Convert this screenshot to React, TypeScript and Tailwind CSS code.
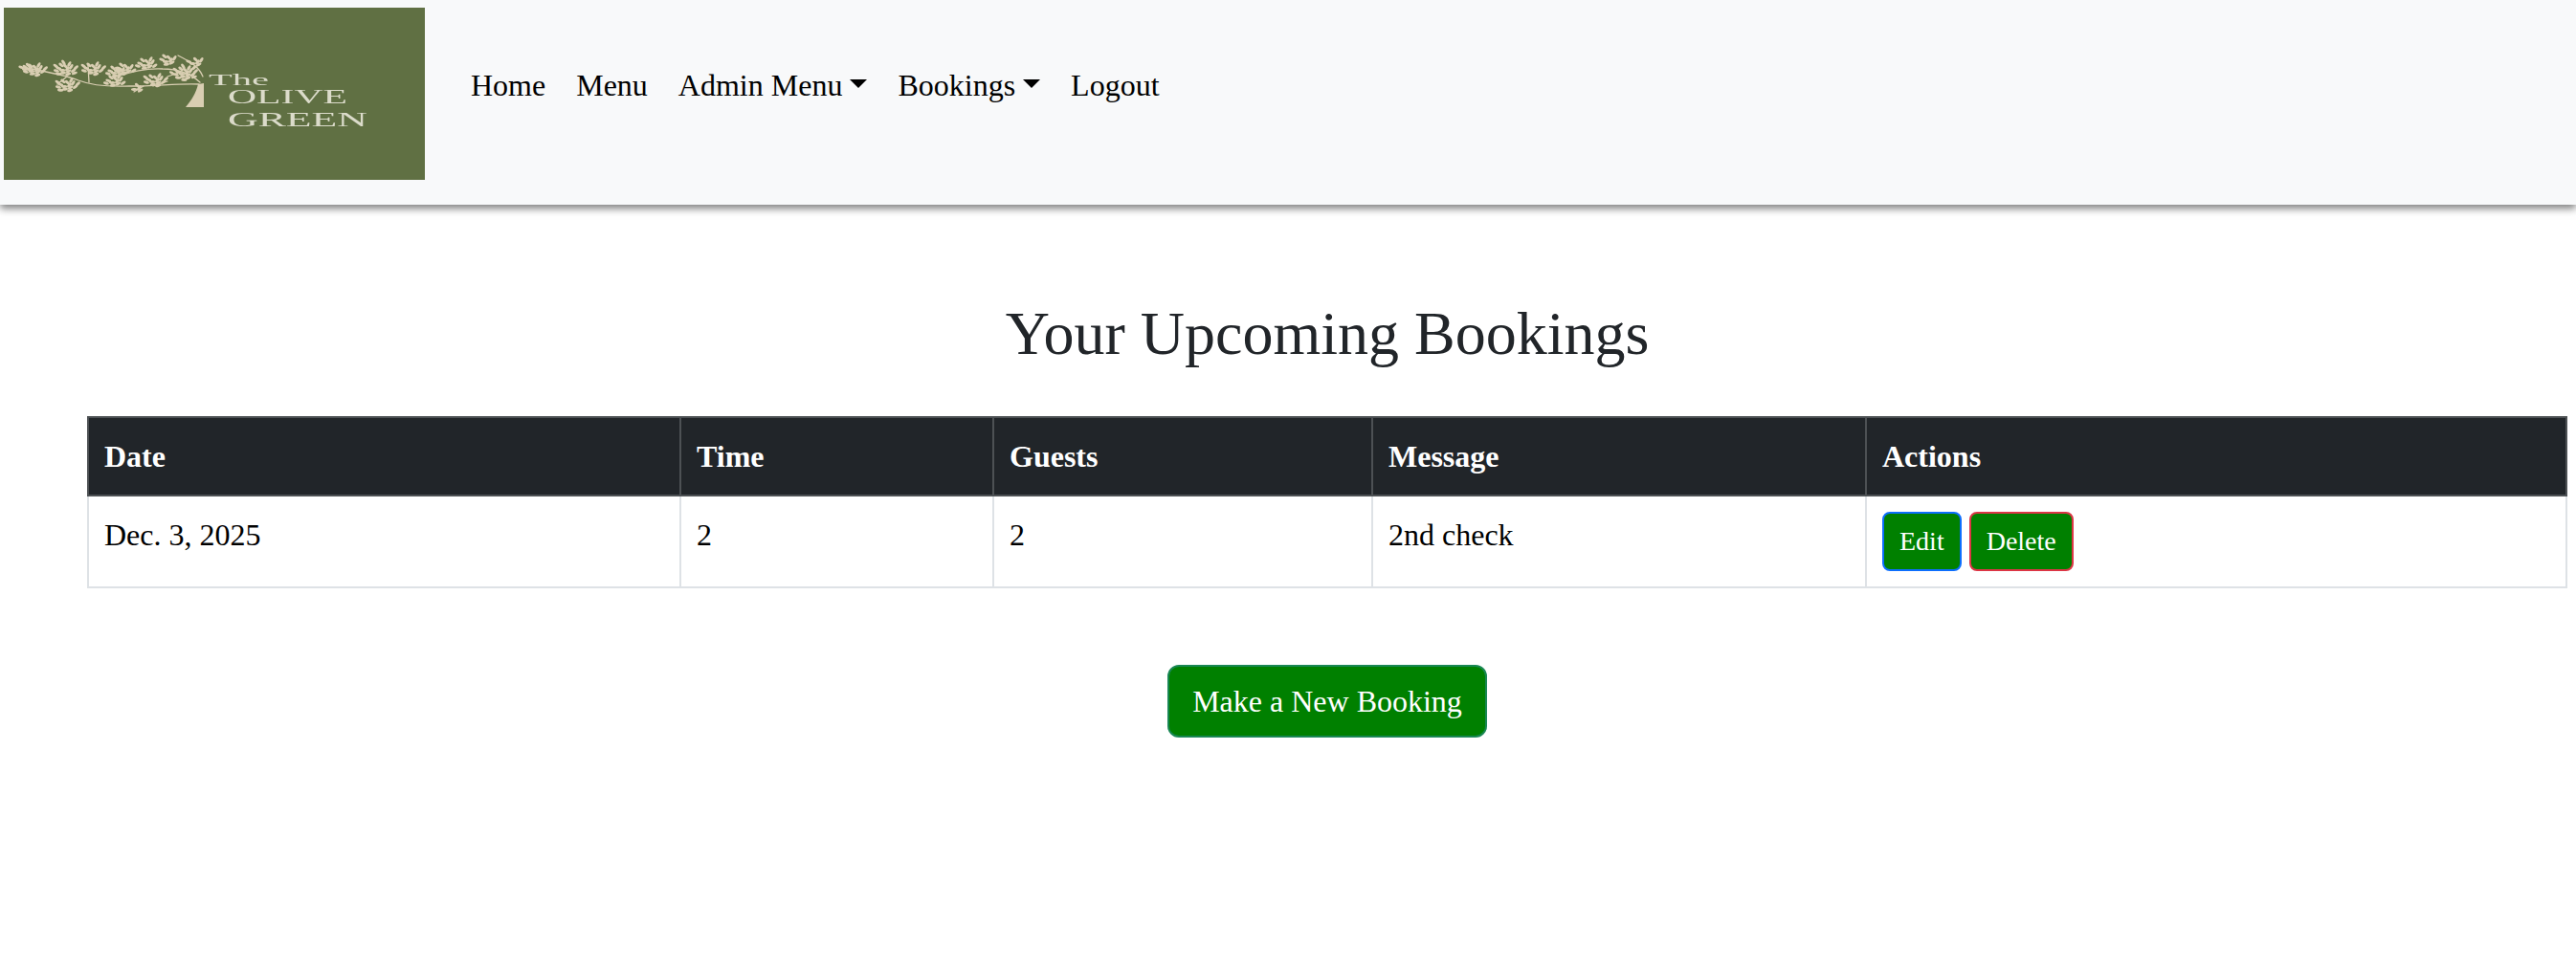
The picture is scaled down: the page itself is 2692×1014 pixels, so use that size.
const serif = "font-['Liberation_Serif',serif]";

const clusters: [number, number, number][] = [
  [36, 73, 14], [29, 71, 5], [68, 72, 17], [97, 72, 14], [70, 89, 15], [122, 75, 10], [131, 72, 10],
  [120, 85, 11], [153, 67, 11], [176, 63, 8], [162, 84, 14], [193, 76, 20], [204, 65, 6], [143, 92, 4],
];

function leaves() {
  const out: { x: number; y: number; a: number }[] = [];
  clusters.forEach(([cx, cy, n]) => {
    for (let i = 0; i < n; i++) {
      const t = i * 2.39996;
      const r = 2.35 * Math.sqrt(i + 0.6);
      out.push({ x: cx + Math.cos(t) * r * 1.35, y: cy + Math.sin(t) * r * 0.72, a: (i * 47 + 10) % 120 - 60 });
    }
  });
  return out;
}

function Logo() {
  return (
    <svg width="440" height="180" viewBox="4 8 440 180" className="block shrink-0">
      <rect x="4" y="8" width="440" height="180" fill="#607043" />
      <g className="blur-[0.5px]">
        <g stroke="#d9ceb2" strokeWidth="1.3" fill="none" strokeLinecap="round">
          <path d="M208 88 C185 87 165 90 135 90 C110 91 95 89 82 84 C70 79 55 76 28 71" />
          <path d="M209 86 C198 76 185 72 170 72 C150 71 135 76 118 81" />
          <path d="M93 86 L92 68" />
          <path d="M212 80 C208 70 200 65 186 58" />
          <path d="M70 80 L60 88 M150 90 L140 96 M175 85 L160 90 M190 75 L175 80" />
        </g>
        <g fill="#d9ceb2">
          {leaves().map((l, i) => (
            <ellipse key={i} cx={l.x} cy={l.y} rx="3.1" ry="1.5" transform={`rotate(${l.a} ${l.x} ${l.y})`} />
          ))}
          <path d="M194 112 L213 112 L213 87 L207 88 C205 97 200 105 194 112 Z" />
        </g>
        <g fill="#f1eee2" fontFamily="'Liberation Serif', serif" opacity="0.85">
          <text x="218" y="89" fontSize="16" textLength="63" lengthAdjust="spacingAndGlyphs">The</text>
          <text x="238" y="108" fontSize="21" textLength="125" lengthAdjust="spacingAndGlyphs">OLIVE</text>
          <text x="238" y="132" fontSize="21" textLength="146" lengthAdjust="spacingAndGlyphs">GREEN</text>
        </g>
      </g>
    </svg>
  );
}

function Caret() {
  return <span className="inline-block ml-[8px] align-[8px] border-t-[9px] border-x-[9px] border-b-0 border-x-transparent border-t-black" />;
}

function NavLink({ label, caret }: { label: string; caret?: boolean }) {
  return (
    <li>
      <a className="block px-4 py-4 text-black whitespace-nowrap">
        {label}
        {caret && <Caret />}
      </a>
    </li>
  );
}

const rows = ["Date", "Time", "Guests", "Message", "Actions"];

export default function App() {
  return (
    <div className={`${serif} min-h-[1014px] bg-white text-[32px] leading-[48px] text-black`}>
      <nav className="h-[214px] bg-[#f8f9fa] shadow-[0_4px_8px_rgba(0,0,0,0.5)] flex items-start pt-2 pl-1">
        <Logo />
        <ul className="flex ml-8 mt-[41px]">
          <NavLink label="Home" />
          <NavLink label="Menu" />
          <NavLink label="Admin Menu" caret />
          <NavLink label="Bookings" caret />
          <NavLink label="Logout" />
        </ul>
      </nav>
      <main className="ml-[91px] mr-[9px] pt-[96px] text-center">
        <h2 className="text-[64px] leading-[77px] font-normal text-[#212529] mb-[48px]">Your Upcoming Bookings</h2>
        <table className="w-full table-fixed border-collapse text-left">
          <colgroup>
            <col className="w-[619px]" />
            <col className="w-[327px]" />
            <col className="w-[396px]" />
            <col className="w-[516px]" />
            <col />
          </colgroup>
          <thead>
            <tr className="bg-[#212529] text-white">
              {rows.map((r) => (
                <th key={r} className="border-2 border-[#4d5154] p-4 font-bold align-bottom">{r}</th>
              ))}
            </tr>
          </thead>
          <tbody>
            <tr>
              <td className="border-2 border-[#dee2e6] p-4 align-top">Dec. 3, 2025</td>
              <td className="border-2 border-[#dee2e6] p-4 align-top">2</td>
              <td className="border-2 border-[#dee2e6] p-4 align-top">2</td>
              <td className="border-2 border-[#dee2e6] p-4 align-top">2nd check</td>
              <td className="border-2 border-[#dee2e6] p-4 align-top">
                <div className="flex gap-2">
                  <a className="block bg-[#008000] text-white text-[28px] leading-[42px] px-4 py-2 border-2 border-[#0d6efd] rounded-lg">Edit</a>
                  <a className="block bg-[#008000] text-white text-[28px] leading-[42px] px-4 py-2 border-2 border-[#dc3545] rounded-lg">Delete</a>
                </div>
              </td>
            </tr>
          </tbody>
        </table>
        <a className="inline-block mt-20 bg-[#008000] text-white px-6 py-3 border-2 border-[#198754] rounded-xl">Make a New Booking</a>
      </main>
    </div>
  );
}
